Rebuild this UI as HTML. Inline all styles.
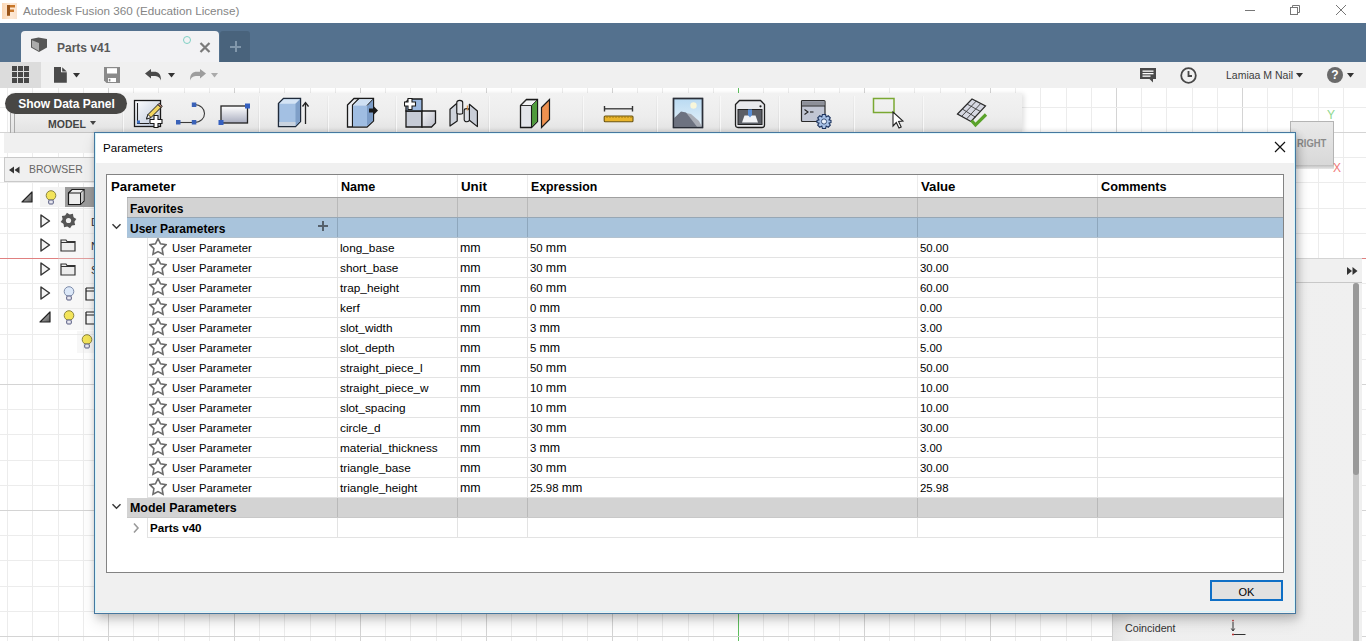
<!DOCTYPE html>
<html><head><meta charset="utf-8"><style>
*{box-sizing:border-box;margin:0;padding:0}
html,body{width:1366px;height:641px;overflow:hidden;background:#fff;font-family:"Liberation Sans",sans-serif;position:relative}
.a{position:absolute;white-space:nowrap}
.th{font-size:12.6px;font-weight:bold;color:#000;line-height:16px}
.tb{font-size:12px;font-weight:bold;color:#000;line-height:16px}
.td{font-size:11.4px;color:#000;line-height:16px}
.up{font-size:11.3px}
.mm{font-size:12.4px}
#dlgshadow{display:none}
#dlg{left:94px;top:132px;width:1202px;height:482px;background:#f0f0f0;border:1px solid #46789f;box-shadow:0 -1px 4px rgba(0,0,0,.10),3px 4px 8px rgba(0,0,0,.16),1px 8px 14px rgba(0,0,0,.12)}
</style></head><body>
<div class="a" style="left:0;top:88px;width:1366px;height:553px;background:#fff"></div>
<div class="a" style="left:7px;top:88px;width:1px;height:553px;background:#ececec"></div>
<div class="a" style="left:32px;top:88px;width:1px;height:553px;background:#ececec"></div>
<div class="a" style="left:58px;top:88px;width:1px;height:553px;background:#ececec"></div>
<div class="a" style="left:83px;top:88px;width:1px;height:553px;background:#ececec"></div>
<div class="a" style="left:108px;top:88px;width:1px;height:553px;background:#d4d4d4"></div>
<div class="a" style="left:133px;top:88px;width:1px;height:553px;background:#ececec"></div>
<div class="a" style="left:158px;top:88px;width:1px;height:553px;background:#ececec"></div>
<div class="a" style="left:184px;top:88px;width:1px;height:553px;background:#ececec"></div>
<div class="a" style="left:209px;top:88px;width:1px;height:553px;background:#ececec"></div>
<div class="a" style="left:234px;top:88px;width:1px;height:553px;background:#d4d4d4"></div>
<div class="a" style="left:259px;top:88px;width:1px;height:553px;background:#ececec"></div>
<div class="a" style="left:284px;top:88px;width:1px;height:553px;background:#ececec"></div>
<div class="a" style="left:310px;top:88px;width:1px;height:553px;background:#ececec"></div>
<div class="a" style="left:335px;top:88px;width:1px;height:553px;background:#ececec"></div>
<div class="a" style="left:360px;top:88px;width:1px;height:553px;background:#d4d4d4"></div>
<div class="a" style="left:385px;top:88px;width:1px;height:553px;background:#ececec"></div>
<div class="a" style="left:410px;top:88px;width:1px;height:553px;background:#ececec"></div>
<div class="a" style="left:436px;top:88px;width:1px;height:553px;background:#ececec"></div>
<div class="a" style="left:461px;top:88px;width:1px;height:553px;background:#ececec"></div>
<div class="a" style="left:486px;top:88px;width:1px;height:553px;background:#d4d4d4"></div>
<div class="a" style="left:511px;top:88px;width:1px;height:553px;background:#ececec"></div>
<div class="a" style="left:536px;top:88px;width:1px;height:553px;background:#ececec"></div>
<div class="a" style="left:562px;top:88px;width:1px;height:553px;background:#ececec"></div>
<div class="a" style="left:587px;top:88px;width:1px;height:553px;background:#ececec"></div>
<div class="a" style="left:612px;top:88px;width:1px;height:553px;background:#d4d4d4"></div>
<div class="a" style="left:637px;top:88px;width:1px;height:553px;background:#ececec"></div>
<div class="a" style="left:662px;top:88px;width:1px;height:553px;background:#ececec"></div>
<div class="a" style="left:688px;top:88px;width:1px;height:553px;background:#ececec"></div>
<div class="a" style="left:713px;top:88px;width:1px;height:553px;background:#ececec"></div>
<div class="a" style="left:738px;top:88px;width:1px;height:553px;background:#5fbf5f"></div>
<div class="a" style="left:763px;top:88px;width:1px;height:553px;background:#ececec"></div>
<div class="a" style="left:788px;top:88px;width:1px;height:553px;background:#ececec"></div>
<div class="a" style="left:814px;top:88px;width:1px;height:553px;background:#ececec"></div>
<div class="a" style="left:839px;top:88px;width:1px;height:553px;background:#ececec"></div>
<div class="a" style="left:864px;top:88px;width:1px;height:553px;background:#d4d4d4"></div>
<div class="a" style="left:889px;top:88px;width:1px;height:553px;background:#ececec"></div>
<div class="a" style="left:914px;top:88px;width:1px;height:553px;background:#ececec"></div>
<div class="a" style="left:940px;top:88px;width:1px;height:553px;background:#ececec"></div>
<div class="a" style="left:965px;top:88px;width:1px;height:553px;background:#ececec"></div>
<div class="a" style="left:990px;top:88px;width:1px;height:553px;background:#d4d4d4"></div>
<div class="a" style="left:1015px;top:88px;width:1px;height:553px;background:#ececec"></div>
<div class="a" style="left:1040px;top:88px;width:1px;height:553px;background:#ececec"></div>
<div class="a" style="left:1066px;top:88px;width:1px;height:553px;background:#ececec"></div>
<div class="a" style="left:1091px;top:88px;width:1px;height:553px;background:#ececec"></div>
<div class="a" style="left:1116px;top:88px;width:1px;height:553px;background:#d4d4d4"></div>
<div class="a" style="left:1141px;top:88px;width:1px;height:553px;background:#ececec"></div>
<div class="a" style="left:1166px;top:88px;width:1px;height:553px;background:#ececec"></div>
<div class="a" style="left:1192px;top:88px;width:1px;height:553px;background:#ececec"></div>
<div class="a" style="left:1217px;top:88px;width:1px;height:553px;background:#ececec"></div>
<div class="a" style="left:1242px;top:88px;width:1px;height:553px;background:#d4d4d4"></div>
<div class="a" style="left:1267px;top:88px;width:1px;height:553px;background:#ececec"></div>
<div class="a" style="left:1292px;top:88px;width:1px;height:553px;background:#ececec"></div>
<div class="a" style="left:1318px;top:88px;width:1px;height:553px;background:#ececec"></div>
<div class="a" style="left:1343px;top:88px;width:1px;height:553px;background:#ececec"></div>
<div class="a" style="left:0;top:107px;width:1366px;height:1px;background:#ececec"></div>
<div class="a" style="left:0;top:132px;width:1366px;height:1px;background:#d4d4d4"></div>
<div class="a" style="left:0;top:157px;width:1366px;height:1px;background:#ececec"></div>
<div class="a" style="left:0;top:182px;width:1366px;height:1px;background:#ececec"></div>
<div class="a" style="left:0;top:208px;width:1366px;height:1px;background:#ececec"></div>
<div class="a" style="left:0;top:233px;width:1366px;height:1px;background:#ececec"></div>
<div class="a" style="left:0;top:258px;width:1366px;height:1px;background:#e08080"></div>
<div class="a" style="left:0;top:283px;width:1366px;height:1px;background:#ececec"></div>
<div class="a" style="left:0;top:308px;width:1366px;height:1px;background:#ececec"></div>
<div class="a" style="left:0;top:334px;width:1366px;height:1px;background:#ececec"></div>
<div class="a" style="left:0;top:359px;width:1366px;height:1px;background:#ececec"></div>
<div class="a" style="left:0;top:384px;width:1366px;height:1px;background:#d4d4d4"></div>
<div class="a" style="left:0;top:409px;width:1366px;height:1px;background:#ececec"></div>
<div class="a" style="left:0;top:434px;width:1366px;height:1px;background:#ececec"></div>
<div class="a" style="left:0;top:460px;width:1366px;height:1px;background:#ececec"></div>
<div class="a" style="left:0;top:485px;width:1366px;height:1px;background:#ececec"></div>
<div class="a" style="left:0;top:510px;width:1366px;height:1px;background:#d4d4d4"></div>
<div class="a" style="left:0;top:535px;width:1366px;height:1px;background:#ececec"></div>
<div class="a" style="left:0;top:560px;width:1366px;height:1px;background:#ececec"></div>
<div class="a" style="left:0;top:586px;width:1366px;height:1px;background:#ececec"></div>
<div class="a" style="left:0;top:611px;width:1366px;height:1px;background:#ececec"></div>
<div class="a" style="left:0;top:636px;width:1366px;height:1px;background:#d4d4d4"></div>
<div class="a" style="left:0;top:0;width:1366px;height:23px;background:#fff"></div>
<div class="a" style="left:2px;top:3px;width:15px;height:16px;background:linear-gradient(90deg,#fbd7b4,#fde9d6 60%,#fbe2cc)"></div>
<svg class="a" style="left:6px;top:4px" width="10" height="13" viewBox="0 0 10 13"><path d="M1 1 H9 V3.6 H4 V5.6 H8 V8 H4 V11.6 H1 Z" fill="#c8772a"/><path d="M1 1 H4 V11.6 H1 Z" fill="#9a5418"/></svg>
<div class="a" style="left:23px;top:3px;font-size:11.7px;color:#858585;line-height:15px">Autodesk Fusion 360 (Education License)</div>
<div class="a" style="left:1245px;top:10px;width:10px;height:1px;background:#777"></div>
<svg class="a" style="left:1289px;top:4px" width="12" height="12" viewBox="0 0 12 12"><path d="M3.5 3.5 V1.5 H10.5 V8.5 H8.5" fill="none" stroke="#777" stroke-width="1"/><rect x="1.5" y="3.5" width="7" height="7" fill="none" stroke="#777" stroke-width="1"/></svg>
<svg class="a" style="left:1335px;top:4px" width="12" height="12" viewBox="0 0 12 12"><path d="M1 1 L11 11 M11 1 L1 11" stroke="#777" stroke-width="1"/></svg>
<div class="a" style="left:0;top:23px;width:1366px;height:39px;background:#54718e"></div>
<div class="a" style="left:21px;top:31px;width:198px;height:31px;background:#f2f2f4;border-radius:4px 4px 0 0"></div>
<div class="a" style="left:220px;top:31px;width:30px;height:31px;background:#49637c;border-radius:3px 3px 0 0"></div>
<div class="a" style="left:230px;top:46px;width:11px;height:1.5px;background:#8197ab"></div>
<div class="a" style="left:235px;top:41px;width:1.5px;height:11px;background:#8197ab"></div>
<svg class="a" style="left:30px;top:36px" width="18" height="17" viewBox="0 0 18 17"><path d="M1 3 L8.5 1.5 L17 3 L17 11.5 L9 16 L1 11.5 Z" fill="#565656"/><path d="M2 4.2 L9 7 L9 15 L2 11 Z" fill="#ababab"/></svg>
<div class="a" style="left:57px;top:41px;font-size:12px;font-weight:bold;color:#595959;line-height:15px">Parts v41</div>
<div class="a" style="left:183px;top:36px;width:8px;height:8px;border:1.3px solid #7fd0c4;border-radius:50%"></div>
<svg class="a" style="left:199px;top:42px" width="12" height="11" viewBox="0 0 12 11"><path d="M1.5 1 L10.5 10 M10.5 1 L1.5 10" stroke="#7a7a7a" stroke-width="2.2"/></svg>
<div class="a" style="left:0;top:62px;width:1366px;height:26px;background:#f0f0f0"></div>
<div class="a" style="left:0;top:62px;width:41px;height:26px;background:#dcdcdc"></div>
<svg class="a" style="left:12px;top:66px" width="17" height="17" viewBox="0 0 17 17"><rect x="0" y="0" width="5" height="5" fill="#474747"/><rect x="6" y="0" width="5" height="5" fill="#474747"/><rect x="12" y="0" width="5" height="5" fill="#474747"/><rect x="0" y="6" width="5" height="5" fill="#474747"/><rect x="6" y="6" width="5" height="5" fill="#474747"/><rect x="12" y="6" width="5" height="5" fill="#474747"/><rect x="0" y="12" width="5" height="5" fill="#474747"/><rect x="6" y="12" width="5" height="5" fill="#474747"/><rect x="12" y="12" width="5" height="5" fill="#474747"/></svg>
<svg class="a" style="left:54px;top:67px" width="13" height="16" viewBox="0 0 13 16"><path d="M0 0 H7 V5.2 H12.8 V15.8 H0 Z" fill="#4a4a4a"/><path d="M8.2 0.2 L12.8 4.4 H8.2 Z" fill="#4a4a4a"/></svg>
<svg class="a" style="left:73px;top:73px" width="7" height="5" viewBox="0 0 7 5"><path d="M0 0 H7 L3.5 4.5 Z" fill="#333"/></svg>
<svg class="a" style="left:104px;top:67px" width="16" height="16" viewBox="0 0 16 16"><path d="M0 0 H16 V16 H2.5 L0 13.5 Z" fill="#8a8a8a"/><rect x="3" y="1.2" width="10" height="5.3" fill="#fff"/><rect x="4" y="11" width="8" height="4" fill="#fff"/><rect x="4.8" y="11.8" width="1.6" height="2.6" fill="#8a8a8a"/></svg>
<svg class="a" style="left:145px;top:69px" width="17" height="12" viewBox="0 0 17 12"><path d="M0 4.5 L6 0 V2.8 H9 C13.5 2.8 16 5 16 11.5 C14.5 8 12.5 7 9 7 H6 V9.5 Z" fill="#4a4a4a"/></svg>
<svg class="a" style="left:168px;top:73px" width="7" height="5" viewBox="0 0 7 5"><path d="M0 0 H7 L3.5 4.5 Z" fill="#333"/></svg>
<svg class="a" style="left:189px;top:69px" width="17" height="12" viewBox="0 0 17 12"><path d="M17 4.5 L11 0 V2.8 H8 C3.5 2.8 1 5 1 11.5 C2.5 8 4.5 7 8 7 H11 V9.5 Z" fill="#9d9d9d"/></svg>
<svg class="a" style="left:211px;top:73px" width="7" height="5" viewBox="0 0 7 5"><path d="M0 0 H7 L3.5 4.5 Z" fill="#aaa"/></svg>
<svg class="a" style="left:1140px;top:68px" width="17" height="15" viewBox="0 0 17 15"><path d="M0 0 H16 V11 H13 L13 14.5 L9.5 11 H0 Z" fill="#4a4a4a"/><rect x="2.5" y="2.5" width="11" height="1.3" fill="#fff"/><rect x="2.5" y="5" width="11" height="1.3" fill="#fff"/><rect x="2.5" y="7.5" width="8" height="1.3" fill="#fff"/></svg>
<svg class="a" style="left:1180px;top:67px" width="17" height="17" viewBox="0 0 17 17"><circle cx="8.5" cy="8.5" r="7.3" fill="none" stroke="#474747" stroke-width="1.8"/><path d="M8.5 4 V9 H12" fill="none" stroke="#474747" stroke-width="1.8"/></svg>
<div class="a" style="left:1226px;top:68px;font-size:10.5px;letter-spacing:0;color:#3c3c3c;line-height:14px">Lamiaa M Nail</div>
<svg class="a" style="left:1296px;top:73px" width="7" height="5" viewBox="0 0 7 5"><path d="M0 0 H7 L3.5 4.5 Z" fill="#333"/></svg>
<div class="a" style="left:1327px;top:67px;width:16px;height:16px;border-radius:50%;background:#6a6a6a;color:#fff;font-weight:bold;font-size:12px;text-align:center;line-height:16px">?</div>
<svg class="a" style="left:1347px;top:73px" width="7" height="5" viewBox="0 0 7 5"><path d="M0 0 H7 L3.5 4.5 Z" fill="#333"/></svg>
<div class="a" style="left:10px;top:93px;width:1012px;height:39px;background:linear-gradient(#f2f2f2,#ededed 60%,#e3e3e3);box-shadow:2px 1px 5px rgba(0,0,0,.13)"></div>
<div class="a" style="left:122px;top:96px;width:1px;height:36px;background:linear-gradient(#ededed,#dadada)"></div><div class="a" style="left:123px;top:96px;width:1px;height:36px;background:#f8f8f8"></div>
<div class="a" style="left:258px;top:96px;width:1px;height:36px;background:linear-gradient(#ededed,#dadada)"></div><div class="a" style="left:259px;top:96px;width:1px;height:36px;background:#f8f8f8"></div>
<div class="a" style="left:327px;top:96px;width:1px;height:36px;background:linear-gradient(#ededed,#dadada)"></div><div class="a" style="left:328px;top:96px;width:1px;height:36px;background:#f8f8f8"></div>
<div class="a" style="left:395px;top:96px;width:1px;height:36px;background:linear-gradient(#ededed,#dadada)"></div><div class="a" style="left:396px;top:96px;width:1px;height:36px;background:#f8f8f8"></div>
<div class="a" style="left:488px;top:96px;width:1px;height:36px;background:linear-gradient(#ededed,#dadada)"></div><div class="a" style="left:489px;top:96px;width:1px;height:36px;background:#f8f8f8"></div>
<div class="a" style="left:582px;top:96px;width:1px;height:36px;background:linear-gradient(#ededed,#dadada)"></div><div class="a" style="left:583px;top:96px;width:1px;height:36px;background:#f8f8f8"></div>
<div class="a" style="left:656px;top:96px;width:1px;height:36px;background:linear-gradient(#ededed,#dadada)"></div><div class="a" style="left:657px;top:96px;width:1px;height:36px;background:#f8f8f8"></div>
<div class="a" style="left:719px;top:96px;width:1px;height:36px;background:linear-gradient(#ededed,#dadada)"></div><div class="a" style="left:720px;top:96px;width:1px;height:36px;background:#f8f8f8"></div>
<div class="a" style="left:778px;top:96px;width:1px;height:36px;background:linear-gradient(#ededed,#dadada)"></div><div class="a" style="left:779px;top:96px;width:1px;height:36px;background:#f8f8f8"></div>
<div class="a" style="left:853px;top:96px;width:1px;height:36px;background:linear-gradient(#ededed,#dadada)"></div><div class="a" style="left:854px;top:96px;width:1px;height:36px;background:#f8f8f8"></div>
<div class="a" style="left:922px;top:96px;width:1px;height:36px;background:linear-gradient(#ededed,#dadada)"></div><div class="a" style="left:923px;top:96px;width:1px;height:36px;background:#f8f8f8"></div>
<svg class="a" style="left:0;top:0" width="0" height="0"><defs><linearGradient id="gsk" x1="0" y1="0" x2="1" y2="1"><stop offset="0" stop-color="#ffffff"/><stop offset="1" stop-color="#b8c4d8"/></linearGradient><linearGradient id="grc" x1="0" y1="0" x2="0" y2="1"><stop offset="0" stop-color="#ffffff"/><stop offset="1" stop-color="#a9adbf"/></linearGradient><linearGradient id="gsky" x1="0" y1="0" x2="0" y2="1"><stop offset="0" stop-color="#b9daf2"/><stop offset="1" stop-color="#e6f2fa"/></linearGradient><linearGradient id="ggr" x1="0" y1="0" x2="1" y2="1"><stop offset="0" stop-color="#f4f4f6"/><stop offset="1" stop-color="#b9bcc8"/></linearGradient></defs></svg>
<svg class="a" style="left:133px;top:99px" width="30" height="31" viewBox="0 0 30 31"><rect x="1.5" y="1.5" width="26" height="26" fill="url(#gsk)" stroke="#1a1a1a" stroke-width="1.3"/><path d="M4.5 4 V24.5 H16" fill="none" stroke="#222" stroke-width="1.1"/><rect x="4" y="21.5" width="3" height="3" fill="#3d6fc4"/><path d="M13.5 20 L15 15.5 L25 5.5 L28 8.5 L18 18.5 Z" fill="#f2d660" stroke="#1a1a1a" stroke-width="1"/><path d="M25 5.5 L26.3 4.2 L29.3 7.2 L28 8.5 Z" fill="#c08a7a" stroke="#1a1a1a" stroke-width="0.9"/><path d="M13.5 20 L15 15.5 L18 18.5 Z" fill="#fff" stroke="#1a1a1a" stroke-width="0.9"/><path d="M21 16.5 H25 V20.5 H29 V24.5 H25 V28.5 H21 V24.5 H17 V20.5 H21 Z" fill="#fff" stroke="#1a1a1a" stroke-width="1.1"/></svg>
<svg class="a" style="left:175px;top:102px" width="34" height="24" viewBox="0 0 34 24"><path d="M3 20.5 H19" stroke="#3a3a3a" stroke-width="1.1"/><path d="M19 2.5 C33 2.5 33 20.5 19 20.5" fill="none" stroke="#3a3a3a" stroke-width="1.1"/><rect x="1" y="18" width="4.5" height="4.5" fill="#3a62b8"/><rect x="16.8" y="18" width="4.5" height="4.5" fill="#3a62b8"/><rect x="16.8" y="0.5" width="4.5" height="4.5" fill="#3a62b8"/></svg>
<svg class="a" style="left:218px;top:103px" width="33" height="23" viewBox="0 0 33 23"><rect x="3" y="3" width="26.5" height="17" fill="url(#grc)" stroke="#222" stroke-width="1.3"/><rect x="0.5" y="17" width="5" height="5" fill="#3560c0"/><rect x="27" y="0.5" width="5" height="5" fill="#3560c0"/></svg>
<svg class="a" style="left:277px;top:97px" width="32" height="32" viewBox="0 0 32 32"><path d="M1.5 6.5 L6.5 1.5 H23.5 V24.5 L18.5 29.5 H1.5 Z" fill="#a3c0e3" stroke="#1f2a3a" stroke-width="1.4"/><path d="M2.2 6.8 L6.8 2.2 H23 L18.5 6.8 Z" fill="#d5e4f5"/><path d="M18.5 6.8 L23 2.2 V24.3 L18.5 29 Z" fill="#7f9fc8"/><path d="M2.2 25 H18.5 V29 H2.2 Z" fill="#c9d3e0"/><path d="M28.5 27 V6" stroke="#222" stroke-width="1.3"/><path d="M25.5 9.5 L28.5 5.5 L31.5 9.5" fill="none" stroke="#222" stroke-width="1.3"/></svg>
<svg class="a" style="left:346px;top:97px" width="33" height="32" viewBox="0 0 33 32"><path d="M1.5 8 L8 1.5 H27.5 V24 L21 30 H1.5 Z" fill="#eef0f4" stroke="#1a1a1a" stroke-width="1.3"/><path d="M6.5 30 V8 L13 1.5" fill="none" stroke="#1a1a1a" stroke-width="1.2"/><path d="M7 8.5 L13.3 2.2 H27 L21 8.5 Z" fill="#cfe0f3"/><path d="M7 8.5 H21 V29.3 H7 Z" fill="#9fbde2"/><path d="M21 8.5 L27 2.2 V23.8 L21 29.3 Z" fill="#7b9cc7"/><path d="M21 8.5 L27 2.2" stroke="#1a1a1a" stroke-width="1"/><path d="M23 11.5 H27.5 V9 L32 13.5 L27.5 18 V15.5 H23 Z" fill="#1a1a1a"/></svg>
<svg class="a" style="left:404px;top:97px" width="33" height="32" viewBox="0 0 33 32"><path d="M2 14 H18 V30 H2 Z" fill="#c6cbd6" stroke="#1a1a1a" stroke-width="1.3"/><path d="M18 14 H31.5 L31.5 26 L27.5 30 H18 Z" fill="url(#ggr)" stroke="#1a1a1a" stroke-width="1.3"/><path d="M2 14 V5 L5 2 H18 V14 Z" fill="#9bb8df" stroke="#1a1a1a" stroke-width="1.3"/><path d="M4 1.5 H8 V5 H11.5 V9 H8 V12.5 H4 V9 H0.5 V5 H4 Z" fill="#fff" stroke="#1a1a1a" stroke-width="1.1"/></svg>
<svg class="a" style="left:449px;top:99px" width="30" height="30" viewBox="0 0 30 30"><path d="M1 10.3 L8.2 4 V22 L1 27 Z" fill="#cfd4dc" stroke="#1a1a1a" stroke-width="1.2" stroke-linejoin="round"/><path d="M7.8 3.5 C7.8 0.6 13.7 0.6 13.7 3.5 V14 C13.7 15.5 7.8 15.5 7.8 14 Z" fill="#e4e6ea" stroke="#1a1a1a" stroke-width="1.1"/><path d="M20.4 5.3 L28.4 12 V27.6 L20.4 21.3 Z" fill="#c9ced8" stroke="#1a1a1a" stroke-width="1.2" stroke-linejoin="round"/><path d="M15.2 11.5 C15.2 9 20.4 9 20.4 11.5 V20.8 C20.4 23.3 15.2 23.3 15.2 20.8 Z" fill="#dcdfe5" stroke="#1a1a1a" stroke-width="1.1"/><path d="M18.3 6.5 V11.5" stroke="#e08a30" stroke-width="1"/></svg>
<svg class="a" style="left:519px;top:98px" width="34" height="31" viewBox="0 0 34 31"><path d="M1.5 7.5 L7.5 1.5 H18.5 V23.5 L12.5 29.5 H1.5 Z" fill="#e3e5ea" stroke="#1a1a1a" stroke-width="1.3"/><path d="M12.5 7.5 L18 2 V23.3 L12.5 29 Z" fill="#4f9a3c"/><path d="M2 7.5 H12.5 M12.5 7.5 V29" stroke="#1a1a1a" stroke-width="1.1"/><path d="M2 7.5 L7.5 2 H18 L12.5 7.5 Z" fill="#f2f3f5" stroke="#1a1a1a" stroke-width="0.8"/><path d="M22.5 9.5 L30.5 1.5 V21.5 L22.5 29.5 Z" fill="#ee9150" stroke="#1a1a1a" stroke-width="1.2"/></svg>
<svg class="a" style="left:603px;top:105px" width="32" height="18" viewBox="0 0 32 18"><path d="M1.5 1 V6.5 M29.5 1 V6.5" stroke="#333" stroke-width="1.4"/><path d="M1.5 3.8 H29.5" stroke="#333" stroke-width="1.3"/><rect x="1.2" y="11" width="28.8" height="5.8" rx="1" fill="#e9b52c" stroke="#6b5412" stroke-width="1.1"/><path d="M4 11.5 V13 M7 11.5 V13 M10 11.5 V13 M13 11.5 V13 M16 11.5 V13 M19 11.5 V13 M22 11.5 V13 M25 11.5 V13 M28 11.5 V13" stroke="#8a6a10" stroke-width="0.8"/></svg>
<svg class="a" style="left:672px;top:97px" width="32" height="32" viewBox="0 0 32 32"><rect x="1.5" y="1.5" width="29" height="29" fill="url(#gsky)" stroke="#2a2e38" stroke-width="1.4"/><circle cx="21.5" cy="8.5" r="3.2" fill="#fbf7d8" opacity=".95"/><path d="M2.2 22 L9 15 L19 17 L27 24 L30 29.8 H2.2 Z" fill="#a9adb6"/><path d="M2.2 21 L9 14.5 L14 15.5 L25 29.8 H2.2 Z" fill="#6d7280"/><rect x="1.5" y="1.5" width="29" height="29" fill="none" stroke="#2a2e38" stroke-width="1.4"/></svg>
<svg class="a" style="left:734px;top:99px" width="32" height="30" viewBox="0 0 32 30"><path d="M1.5 5.5 L5.5 1.5 H26.5 L30.5 5.5 V26 Q30.5 28.5 28 28.5 H4 Q1.5 28.5 1.5 26 Z" fill="#e8e9ec" stroke="#1f1f1f" stroke-width="1.3"/><rect x="4" y="10.5" width="24" height="15" fill="#5b5e66" stroke="#222" stroke-width="1"/><path d="M8 23.5 L10.5 16.5 H21.5 L24 23.5 Z" fill="#f2f3f6"/><path d="M14 10.5 H18 V16 L16 18.5 L14 16 Z" fill="#5a8fd6"/><circle cx="26.5" cy="7.3" r="1.1" fill="#1e1e1e"/></svg>
<svg class="a" style="left:800px;top:99px" width="34" height="31" viewBox="0 0 34 31"><rect x="1.5" y="1.5" width="23.5" height="21" rx="1" fill="#c1c6d4" stroke="#2a2a2a" stroke-width="1.2"/><rect x="2.2" y="2.2" width="22.2" height="4.5" fill="#8d9099"/><path d="M2 7 H25" stroke="#2a2a2a" stroke-width="1"/><path d="M4.5 10.5 L8 13 L4.5 15.5" fill="none" stroke="#222" stroke-width="1.1"/><path d="M10 13 H13.5" stroke="#222" stroke-width="1.1"/><g transform="translate(24,22.5)"><path d="M-1.6 -7 H1.6 L2.2 -4.6 L4.2 -5.7 L6.3 -3.6 L5 -1.6 L7 -1 V1 L5 1.6 L6.3 3.6 L4.2 5.7 L2.2 4.6 L1.6 7 H-1.6 L-2.2 4.6 L-4.2 5.7 L-6.3 3.6 L-5 1.6 L-7 1 V-1 L-5 -1.6 L-6.3 -3.6 L-4.2 -5.7 L-2.2 -4.6 Z" fill="#a9c3e8" stroke="#1e3560" stroke-width="1.1"/><circle r="2.6" fill="#eaf2fc" stroke="#1e3560" stroke-width="0.8"/></g></svg>
<svg class="a" style="left:872px;top:97px" width="32" height="32" viewBox="0 0 32 32"><rect x="1.5" y="1.5" width="20.5" height="14" fill="none" stroke="#7aa832" stroke-width="1.5"/><path d="M21 15 V29 L24.3 25.5 L27 31 L29.2 30 L26.6 24.5 L31 24 Z" fill="#fff" stroke="#222" stroke-width="1.1"/></svg>
<svg class="a" style="left:956px;top:98px" width="33" height="30" viewBox="0 0 33 30"><path d="M1.5 16 L16 1 L29.5 8 L15 23.5 Z" fill="#d6d8e2" stroke="#2a2a2a" stroke-width="1.2"/><path d="M6.3 11 L19.5 19.2 M11 6 L24.5 13.5 M5.5 18.5 L20.5 2.8 M10.5 21 L25 5.2" stroke="#3a3a3a" stroke-width="0.9"/><path d="M15.5 22.5 L19.5 27 L30 16.5" fill="none" stroke="#5aa22a" stroke-width="3.2"/></svg>
<div class="a" style="left:10px;top:113px;width:1px;height:21px;background:#a8a8a8"></div><div class="a" style="left:14px;top:113px;width:1px;height:21px;background:#a8a8a8"></div>
<div class="a" style="left:48px;top:118px;font-size:10.5px;font-weight:bold;color:#444;line-height:12px">MODEL</div>
<svg class="a" style="left:90px;top:121px" width="6" height="4" viewBox="0 0 6 4"><path d="M0 0 H6 L3 4 Z" fill="#444"/></svg>
<div class="a" style="left:5px;top:93px;width:122px;height:21px;border-radius:11px;background:#484745;color:#fff;font-size:12px;font-weight:bold;text-align:center;line-height:23px;text-indent:1px">Show Data Panel</div>
<div class="a" style="left:4px;top:133px;width:100px;height:20px;background:#f0f0f0"></div>
<div class="a" style="left:4px;top:157px;width:100px;height:25px;background:#f0f0f0;border:1px solid #c9c9c9"></div>
<svg class="a" style="left:9px;top:166px" width="11" height="8" viewBox="0 0 11 8"><path d="M5 0.5 V7.5 L0 4 Z M10.5 0.5 V7.5 L5.5 4 Z" fill="#333"/></svg>
<div class="a" style="left:29px;top:163px;font-size:10.4px;color:#666;line-height:14px">BROWSER</div>
<div class="a" style="left:40px;top:187px;width:25px;height:20px;background:#f3f3f3"></div>
<div class="a" style="left:65px;top:187px;width:29px;height:20px;background:#9c9c9c"></div>
<div class="a" style="left:58px;top:210px;width:36px;height:120px;background:rgba(230,230,230,.3)"></div>
<div class="a" style="left:77px;top:331px;width:17px;height:22px;background:rgba(230,230,230,.3)"></div>
<svg class="a" style="left:21px;top:191px" width="12" height="12" viewBox="0 0 12 12"><defs><linearGradient id="gt" x1="0" y1="0" x2="1" y2="1"><stop offset="0" stop-color="#d8d8d8"/><stop offset="1" stop-color="#555"/></linearGradient></defs><path d="M1 11 L11 1 V11 Z" fill="url(#gt)" stroke="#222" stroke-width="1.2" stroke-linejoin="round"/></svg>
<svg class="a" style="left:45px;top:190px" width="12" height="15" viewBox="0 0 12 15"><circle cx="6" cy="5.5" r="4.8" fill="#f3e45a" stroke="#8a8440" stroke-width="1"/><rect x="3.7" y="10" width="4.6" height="4" rx="1" fill="#e8e8f0" stroke="#555a80" stroke-width="1"/></svg>
<svg class="a" style="left:67px;top:188px" width="20" height="18" viewBox="0 0 20 18"><path d="M1.5 5 L5 1.5 H17 V13 L13.5 16.5 H1.5 Z" fill="#eeeeee" stroke="#1a1a1a" stroke-width="1.2"/><path d="M1.5 5 H13.5 V16.5 M13.5 5 L17 1.5" fill="none" stroke="#1a1a1a" stroke-width="1"/><path d="M14 5.5 L16.5 3 V12.8 L14 15.5 Z" fill="#c8c8c8"/></svg>
<svg class="a" style="left:40px;top:214px" width="11" height="14" viewBox="0 0 11 14"><path d="M1 1 L9.5 7 L1 13 Z" fill="#f4f4f4" stroke="#333" stroke-width="1.4" stroke-linejoin="round"/></svg>
<svg class="a" style="left:60px;top:212px" width="17" height="17" viewBox="0 0 17 17"><g transform="translate(8.5,8.5)"><polygon points="7.85,-1.56 5.88,1.17 6.65,4.44 3.33,4.99 1.56,7.85 -1.17,5.88 -4.44,6.65 -4.99,3.33 -7.85,1.56 -5.88,-1.17 -6.65,-4.44 -3.33,-4.99 -1.56,-7.85 1.17,-5.88 4.44,-6.65 4.99,-3.33" fill="#555"/><circle r="5.8" fill="#555"/><circle r="2.6" fill="#f0f0f0"/></g></svg>
<svg class="a" style="left:40px;top:238px" width="11" height="14" viewBox="0 0 11 14"><path d="M1 1 L9.5 7 L1 13 Z" fill="#f4f4f4" stroke="#333" stroke-width="1.4" stroke-linejoin="round"/></svg>
<svg class="a" style="left:60px;top:239px" width="16" height="13" viewBox="0 0 16 13"><path d="M1 1 H6 L7 2.5 H15 V12 H1 Z" fill="#ececec" stroke="#333" stroke-width="1.2"/><path d="M1 3.5 H15" stroke="#333" stroke-width="1"/></svg>
<svg class="a" style="left:40px;top:262px" width="11" height="14" viewBox="0 0 11 14"><path d="M1 1 L9.5 7 L1 13 Z" fill="#f4f4f4" stroke="#333" stroke-width="1.4" stroke-linejoin="round"/></svg>
<svg class="a" style="left:60px;top:263px" width="16" height="13" viewBox="0 0 16 13"><path d="M1 1 H6 L7 2.5 H15 V12 H1 Z" fill="#ececec" stroke="#333" stroke-width="1.2"/><path d="M1 3.5 H15" stroke="#333" stroke-width="1"/></svg>
<svg class="a" style="left:40px;top:286px" width="11" height="14" viewBox="0 0 11 14"><path d="M1 1 L9.5 7 L1 13 Z" fill="#f4f4f4" stroke="#333" stroke-width="1.4" stroke-linejoin="round"/></svg>
<svg class="a" style="left:63px;top:286px" width="12" height="15" viewBox="0 0 12 15"><circle cx="6" cy="5.5" r="4.8" fill="#dce8f8" stroke="#7b8aa8" stroke-width="1"/><rect x="3.7" y="10" width="4.6" height="4" rx="1" fill="#e8e8f0" stroke="#555a80" stroke-width="1"/></svg>
<svg class="a" style="left:85px;top:287px" width="12" height="14" viewBox="0 0 12 14"><path d="M1 1 H12 M1 1 V13 H12 M1 4 H12" fill="none" stroke="#222" stroke-width="1.2"/></svg>
<svg class="a" style="left:39px;top:311px" width="12" height="12" viewBox="0 0 12 12"><defs><linearGradient id="gt" x1="0" y1="0" x2="1" y2="1"><stop offset="0" stop-color="#d8d8d8"/><stop offset="1" stop-color="#555"/></linearGradient></defs><path d="M1 11 L11 1 V11 Z" fill="url(#gt)" stroke="#222" stroke-width="1.2" stroke-linejoin="round"/></svg>
<svg class="a" style="left:63px;top:310px" width="12" height="15" viewBox="0 0 12 15"><circle cx="6" cy="5.5" r="4.8" fill="#f3e45a" stroke="#8a8440" stroke-width="1"/><rect x="3.7" y="10" width="4.6" height="4" rx="1" fill="#e8e8f0" stroke="#555a80" stroke-width="1"/></svg>
<svg class="a" style="left:85px;top:311px" width="12" height="14" viewBox="0 0 12 14"><path d="M1 1 H12 M1 1 V13 H12 M1 4 H12" fill="none" stroke="#222" stroke-width="1.2"/></svg>
<svg class="a" style="left:81px;top:334px" width="12" height="15" viewBox="0 0 12 15"><circle cx="6" cy="5.5" r="4.8" fill="#f3e45a" stroke="#8a8440" stroke-width="1"/><rect x="3.7" y="10" width="4.6" height="4" rx="1" fill="#e8e8f0" stroke="#555a80" stroke-width="1"/></svg>
<div class="a" style="left:91px;top:215px;font-size:11px;color:#333;line-height:14px">D</div>
<div class="a" style="left:91px;top:239px;font-size:11px;color:#333;line-height:14px">N</div>
<div class="a" style="left:91px;top:263px;font-size:11px;color:#333;line-height:14px">S</div>
<div class="a" style="left:1290px;top:121px;width:44px;height:45px;background:linear-gradient(#e9e9e9,#d8d8d8);border:1px solid #b4b4b4"></div>
<div class="a" style="left:1290px;top:165px;width:44px;height:4px;background:linear-gradient(#bdbdbd,#e8e8e8)"></div>
<div class="a" style="left:1297px;top:137px;font-size:11.5px;font-weight:bold;color:#8a8a8a;line-height:13px;transform:scaleX(.82);transform-origin:0 0">RIGHT</div>
<div class="a" style="left:1327px;top:109px;font-size:12px;color:#8ed88e;line-height:12px">Y</div>
<div class="a" style="left:1333px;top:162px;font-size:12px;color:#f07a7a;line-height:12px">X</div>
<div class="a" style="left:1112px;top:258px;width:250px;height:383px;background:linear-gradient(90deg,#e4e4e4,#efefef 20px,#f0f0f0);border-left:1px solid #d0d0d0"></div>
<div class="a" style="left:1112px;top:258px;width:250px;height:25px;background:#f0f0f0;border-bottom:1px solid #c8c8c8;border-top:1px solid #d4d4d4"></div>
<svg class="a" style="left:1347px;top:267px" width="11" height="8" viewBox="0 0 11 8"><path d="M0 0 V8 L5 4 Z M5.5 0 V8 L10.5 4 Z" fill="#333"/></svg>
<div class="a" style="left:1353px;top:283px;width:6px;height:358px;background:#c6c6c6;border-radius:3px 3px 0 0"></div>
<div class="a" style="left:1353px;top:283px;width:6px;height:192px;background:#999;border-radius:3px"></div>
<div class="a" style="left:1125px;top:621px;font-size:10.7px;color:#333;line-height:14px">Coincident</div>
<svg class="a" style="left:1229px;top:618px" width="18" height="20" viewBox="0 0 18 20"><path d="M4 4 V12.5" stroke="#333" stroke-width="1"/><path d="M2.3 10.5 L4 13 L5.7 10.5" fill="none" stroke="#333" stroke-width="1"/><path d="M4 16.5 H16.5" stroke="#333" stroke-width="1"/><circle cx="4" cy="2.6" r="0.9" fill="#b33"/><path d="M3 16.5 H5" stroke="#b33" stroke-width="1.4"/></svg>
<div class="a" id="dlgshadow"></div>
<div class="a" id="dlg"></div>
<div class="a" style="left:95px;top:133px;width:1200px;height:30px;background:#fff"></div>
<div class="a" style="left:95px;top:133px;width:1200px;height:479px;border:1px solid #d6f5fb;border-top-color:#e4f8fc"></div>
<div class="a" style="left:103px;top:141px;font-size:11.6px;color:#000;line-height:14px">Parameters</div>
<svg class="a" style="left:1273px;top:140px" width="14" height="14" viewBox="0 0 14 14"><path d="M2 2 L12 12 M12 2 L2 12" stroke="#111" stroke-width="1.2"/></svg>
<div class="a" style="left:106px;top:174px;width:1178px;height:399px;background:#fff;border:1px solid #838383"></div>
<div class="a" style="left:127px;top:197px;width:1156px;height:1px;background:#a0a0a0"></div>
<div class="a" style="left:337px;top:175px;width:1px;height:22px;background:#ececec"></div>
<div class="a" style="left:457px;top:175px;width:1px;height:22px;background:#ececec"></div>
<div class="a" style="left:527px;top:175px;width:1px;height:22px;background:#ececec"></div>
<div class="a" style="left:917px;top:175px;width:1px;height:22px;background:#ececec"></div>
<div class="a" style="left:1097px;top:175px;width:1px;height:22px;background:#ececec"></div>
<div class="a th" style="left:111px;top:179px;font-size:13.2px">Parameter</div>
<div class="a th" style="left:341px;top:179px;font-size:12.6px">Name</div>
<div class="a th" style="left:461px;top:179px;font-size:13.3px">Unit</div>
<div class="a th" style="left:531px;top:179px;font-size:12.3px">Expression</div>
<div class="a th" style="left:921px;top:179px;font-size:13.2px">Value</div>
<div class="a th" style="left:1101px;top:179px;font-size:12.7px">Comments</div>
<div class="a" style="left:127px;top:198px;width:1156px;height:19px;background:#d3d3d3"></div>
<div class="a" style="left:127px;top:217px;width:1156px;height:1px;background:#97a7b5"></div>
<div class="a" style="left:127px;top:198px;width:1px;height:19px;background:#bdbdbd"></div>
<div class="a" style="left:127px;top:218px;width:1156px;height:19px;background:#a9c4dc"></div>
<div class="a" style="left:127px;top:237px;width:1156px;height:1px;background:#b3c2cf"></div>
<div class="a" style="left:337px;top:198px;width:1px;height:19px;background:#b9b9b9"></div>
<div class="a" style="left:337px;top:218px;width:1px;height:19px;background:#8ea7bd"></div>
<div class="a" style="left:457px;top:198px;width:1px;height:19px;background:#b9b9b9"></div>
<div class="a" style="left:457px;top:218px;width:1px;height:19px;background:#8ea7bd"></div>
<div class="a" style="left:527px;top:198px;width:1px;height:19px;background:#b9b9b9"></div>
<div class="a" style="left:527px;top:218px;width:1px;height:19px;background:#8ea7bd"></div>
<div class="a" style="left:917px;top:198px;width:1px;height:19px;background:#b9b9b9"></div>
<div class="a" style="left:917px;top:218px;width:1px;height:19px;background:#8ea7bd"></div>
<div class="a" style="left:1097px;top:198px;width:1px;height:19px;background:#b9b9b9"></div>
<div class="a" style="left:1097px;top:218px;width:1px;height:19px;background:#8ea7bd"></div>
<div class="a tb" style="left:130px;top:200.5px">Favorites</div>
<div class="a tb" style="left:130px;top:220.5px">User Parameters</div>
<svg class="a" style="left:111px;top:223px" width="11" height="8" viewBox="0 0 11 8"><path d="M1.5 1.3 L5.5 5.2 L9.5 1.3" fill="none" stroke="#383838" stroke-width="1.5"/></svg>
<div class="a" style="left:318px;top:225px;width:10px;height:2px;background:#56616c"></div>
<div class="a" style="left:322px;top:221px;width:2px;height:10px;background:#56616c"></div>
<div class="a" style="left:147px;top:257px;width:1136px;height:1px;background:#e3e3e3"></div>
<svg class="a" style="left:148.5px;top:237.5px" width="18" height="18" viewBox="0 0 18 18"><path d="M9.00 0.70 L11.53 5.82 L17.18 6.64 L13.09 10.63 L14.05 16.26 L9.00 13.60 L3.95 16.26 L4.91 10.63 L0.82 6.64 L6.47 5.82 Z" fill="none" stroke="#6c6c6c" stroke-width="1.6" stroke-linejoin="miter"/></svg>
<div class="a td up" style="left:172px;top:240px">User Parameter</div>
<div class="a td" style="left:340px;top:240px;font-size:11.8px">long_base</div>
<div class="a td" style="left:460px;top:240px"><span class="mm">mm</span></div>
<div class="a td" style="left:530px;top:240px">50 <span class=mm>mm</span></div>
<div class="a td" style="left:920px;top:240px">50.00</div>
<div class="a" style="left:147px;top:277px;width:1136px;height:1px;background:#e3e3e3"></div>
<svg class="a" style="left:148.5px;top:257.5px" width="18" height="18" viewBox="0 0 18 18"><path d="M9.00 0.70 L11.53 5.82 L17.18 6.64 L13.09 10.63 L14.05 16.26 L9.00 13.60 L3.95 16.26 L4.91 10.63 L0.82 6.64 L6.47 5.82 Z" fill="none" stroke="#6c6c6c" stroke-width="1.6" stroke-linejoin="miter"/></svg>
<div class="a td up" style="left:172px;top:260px">User Parameter</div>
<div class="a td" style="left:340px;top:260px;font-size:11.8px">short_base</div>
<div class="a td" style="left:460px;top:260px"><span class="mm">mm</span></div>
<div class="a td" style="left:530px;top:260px">30 <span class=mm>mm</span></div>
<div class="a td" style="left:920px;top:260px">30.00</div>
<div class="a" style="left:147px;top:297px;width:1136px;height:1px;background:#e3e3e3"></div>
<svg class="a" style="left:148.5px;top:277.5px" width="18" height="18" viewBox="0 0 18 18"><path d="M9.00 0.70 L11.53 5.82 L17.18 6.64 L13.09 10.63 L14.05 16.26 L9.00 13.60 L3.95 16.26 L4.91 10.63 L0.82 6.64 L6.47 5.82 Z" fill="none" stroke="#6c6c6c" stroke-width="1.6" stroke-linejoin="miter"/></svg>
<div class="a td up" style="left:172px;top:280px">User Parameter</div>
<div class="a td" style="left:340px;top:280px;font-size:11.8px">trap_height</div>
<div class="a td" style="left:460px;top:280px"><span class="mm">mm</span></div>
<div class="a td" style="left:530px;top:280px">60 <span class=mm>mm</span></div>
<div class="a td" style="left:920px;top:280px">60.00</div>
<div class="a" style="left:147px;top:317px;width:1136px;height:1px;background:#e3e3e3"></div>
<svg class="a" style="left:148.5px;top:297.5px" width="18" height="18" viewBox="0 0 18 18"><path d="M9.00 0.70 L11.53 5.82 L17.18 6.64 L13.09 10.63 L14.05 16.26 L9.00 13.60 L3.95 16.26 L4.91 10.63 L0.82 6.64 L6.47 5.82 Z" fill="none" stroke="#6c6c6c" stroke-width="1.6" stroke-linejoin="miter"/></svg>
<div class="a td up" style="left:172px;top:300px">User Parameter</div>
<div class="a td" style="left:340px;top:300px;font-size:11.8px">kerf</div>
<div class="a td" style="left:460px;top:300px"><span class="mm">mm</span></div>
<div class="a td" style="left:530px;top:300px">0 <span class=mm>mm</span></div>
<div class="a td" style="left:920px;top:300px">0.00</div>
<div class="a" style="left:147px;top:337px;width:1136px;height:1px;background:#e3e3e3"></div>
<svg class="a" style="left:148.5px;top:317.5px" width="18" height="18" viewBox="0 0 18 18"><path d="M9.00 0.70 L11.53 5.82 L17.18 6.64 L13.09 10.63 L14.05 16.26 L9.00 13.60 L3.95 16.26 L4.91 10.63 L0.82 6.64 L6.47 5.82 Z" fill="none" stroke="#6c6c6c" stroke-width="1.6" stroke-linejoin="miter"/></svg>
<div class="a td up" style="left:172px;top:320px">User Parameter</div>
<div class="a td" style="left:340px;top:320px;font-size:11.8px">slot_width</div>
<div class="a td" style="left:460px;top:320px"><span class="mm">mm</span></div>
<div class="a td" style="left:530px;top:320px">3 <span class=mm>mm</span></div>
<div class="a td" style="left:920px;top:320px">3.00</div>
<div class="a" style="left:147px;top:357px;width:1136px;height:1px;background:#e3e3e3"></div>
<svg class="a" style="left:148.5px;top:337.5px" width="18" height="18" viewBox="0 0 18 18"><path d="M9.00 0.70 L11.53 5.82 L17.18 6.64 L13.09 10.63 L14.05 16.26 L9.00 13.60 L3.95 16.26 L4.91 10.63 L0.82 6.64 L6.47 5.82 Z" fill="none" stroke="#6c6c6c" stroke-width="1.6" stroke-linejoin="miter"/></svg>
<div class="a td up" style="left:172px;top:340px">User Parameter</div>
<div class="a td" style="left:340px;top:340px;font-size:11.8px">slot_depth</div>
<div class="a td" style="left:460px;top:340px"><span class="mm">mm</span></div>
<div class="a td" style="left:530px;top:340px">5 <span class=mm>mm</span></div>
<div class="a td" style="left:920px;top:340px">5.00</div>
<div class="a" style="left:147px;top:377px;width:1136px;height:1px;background:#e3e3e3"></div>
<svg class="a" style="left:148.5px;top:357.5px" width="18" height="18" viewBox="0 0 18 18"><path d="M9.00 0.70 L11.53 5.82 L17.18 6.64 L13.09 10.63 L14.05 16.26 L9.00 13.60 L3.95 16.26 L4.91 10.63 L0.82 6.64 L6.47 5.82 Z" fill="none" stroke="#6c6c6c" stroke-width="1.6" stroke-linejoin="miter"/></svg>
<div class="a td up" style="left:172px;top:360px">User Parameter</div>
<div class="a td" style="left:340px;top:360px;font-size:11.8px">straight_piece_l</div>
<div class="a td" style="left:460px;top:360px"><span class="mm">mm</span></div>
<div class="a td" style="left:530px;top:360px">50 <span class=mm>mm</span></div>
<div class="a td" style="left:920px;top:360px">50.00</div>
<div class="a" style="left:147px;top:397px;width:1136px;height:1px;background:#e3e3e3"></div>
<svg class="a" style="left:148.5px;top:377.5px" width="18" height="18" viewBox="0 0 18 18"><path d="M9.00 0.70 L11.53 5.82 L17.18 6.64 L13.09 10.63 L14.05 16.26 L9.00 13.60 L3.95 16.26 L4.91 10.63 L0.82 6.64 L6.47 5.82 Z" fill="none" stroke="#6c6c6c" stroke-width="1.6" stroke-linejoin="miter"/></svg>
<div class="a td up" style="left:172px;top:380px">User Parameter</div>
<div class="a td" style="left:340px;top:380px;font-size:11.8px">straight_piece_w</div>
<div class="a td" style="left:460px;top:380px"><span class="mm">mm</span></div>
<div class="a td" style="left:530px;top:380px">10 <span class=mm>mm</span></div>
<div class="a td" style="left:920px;top:380px">10.00</div>
<div class="a" style="left:147px;top:417px;width:1136px;height:1px;background:#e3e3e3"></div>
<svg class="a" style="left:148.5px;top:397.5px" width="18" height="18" viewBox="0 0 18 18"><path d="M9.00 0.70 L11.53 5.82 L17.18 6.64 L13.09 10.63 L14.05 16.26 L9.00 13.60 L3.95 16.26 L4.91 10.63 L0.82 6.64 L6.47 5.82 Z" fill="none" stroke="#6c6c6c" stroke-width="1.6" stroke-linejoin="miter"/></svg>
<div class="a td up" style="left:172px;top:400px">User Parameter</div>
<div class="a td" style="left:340px;top:400px;font-size:11.8px">slot_spacing</div>
<div class="a td" style="left:460px;top:400px"><span class="mm">mm</span></div>
<div class="a td" style="left:530px;top:400px">10 <span class=mm>mm</span></div>
<div class="a td" style="left:920px;top:400px">10.00</div>
<div class="a" style="left:147px;top:437px;width:1136px;height:1px;background:#e3e3e3"></div>
<svg class="a" style="left:148.5px;top:417.5px" width="18" height="18" viewBox="0 0 18 18"><path d="M9.00 0.70 L11.53 5.82 L17.18 6.64 L13.09 10.63 L14.05 16.26 L9.00 13.60 L3.95 16.26 L4.91 10.63 L0.82 6.64 L6.47 5.82 Z" fill="none" stroke="#6c6c6c" stroke-width="1.6" stroke-linejoin="miter"/></svg>
<div class="a td up" style="left:172px;top:420px">User Parameter</div>
<div class="a td" style="left:340px;top:420px;font-size:11.8px">circle_d</div>
<div class="a td" style="left:460px;top:420px"><span class="mm">mm</span></div>
<div class="a td" style="left:530px;top:420px">30 <span class=mm>mm</span></div>
<div class="a td" style="left:920px;top:420px">30.00</div>
<div class="a" style="left:147px;top:457px;width:1136px;height:1px;background:#e3e3e3"></div>
<svg class="a" style="left:148.5px;top:437.5px" width="18" height="18" viewBox="0 0 18 18"><path d="M9.00 0.70 L11.53 5.82 L17.18 6.64 L13.09 10.63 L14.05 16.26 L9.00 13.60 L3.95 16.26 L4.91 10.63 L0.82 6.64 L6.47 5.82 Z" fill="none" stroke="#6c6c6c" stroke-width="1.6" stroke-linejoin="miter"/></svg>
<div class="a td up" style="left:172px;top:440px">User Parameter</div>
<div class="a td" style="left:340px;top:440px;font-size:11.8px">material_thickness</div>
<div class="a td" style="left:460px;top:440px"><span class="mm">mm</span></div>
<div class="a td" style="left:530px;top:440px">3 <span class=mm>mm</span></div>
<div class="a td" style="left:920px;top:440px">3.00</div>
<div class="a" style="left:147px;top:477px;width:1136px;height:1px;background:#e3e3e3"></div>
<svg class="a" style="left:148.5px;top:457.5px" width="18" height="18" viewBox="0 0 18 18"><path d="M9.00 0.70 L11.53 5.82 L17.18 6.64 L13.09 10.63 L14.05 16.26 L9.00 13.60 L3.95 16.26 L4.91 10.63 L0.82 6.64 L6.47 5.82 Z" fill="none" stroke="#6c6c6c" stroke-width="1.6" stroke-linejoin="miter"/></svg>
<div class="a td up" style="left:172px;top:460px">User Parameter</div>
<div class="a td" style="left:340px;top:460px;font-size:11.8px">triangle_base</div>
<div class="a td" style="left:460px;top:460px"><span class="mm">mm</span></div>
<div class="a td" style="left:530px;top:460px">30 <span class=mm>mm</span></div>
<div class="a td" style="left:920px;top:460px">30.00</div>
<div class="a" style="left:147px;top:497px;width:1136px;height:1px;background:#e3e3e3"></div>
<svg class="a" style="left:148.5px;top:477.5px" width="18" height="18" viewBox="0 0 18 18"><path d="M9.00 0.70 L11.53 5.82 L17.18 6.64 L13.09 10.63 L14.05 16.26 L9.00 13.60 L3.95 16.26 L4.91 10.63 L0.82 6.64 L6.47 5.82 Z" fill="none" stroke="#6c6c6c" stroke-width="1.6" stroke-linejoin="miter"/></svg>
<div class="a td up" style="left:172px;top:480px">User Parameter</div>
<div class="a td" style="left:340px;top:480px;font-size:11.8px">triangle_height</div>
<div class="a td" style="left:460px;top:480px"><span class="mm">mm</span></div>
<div class="a td" style="left:530px;top:480px">25.98 <span class=mm>mm</span></div>
<div class="a td" style="left:920px;top:480px">25.98</div>
<div class="a" style="left:147px;top:238px;width:1px;height:260px;background:#e3e3e3"></div>
<div class="a" style="left:337px;top:238px;width:1px;height:260px;background:#e3e3e3"></div>
<div class="a" style="left:337px;top:518px;width:1px;height:20px;background:#e3e3e3"></div>
<div class="a" style="left:457px;top:238px;width:1px;height:260px;background:#e3e3e3"></div>
<div class="a" style="left:457px;top:518px;width:1px;height:20px;background:#e3e3e3"></div>
<div class="a" style="left:527px;top:238px;width:1px;height:260px;background:#e3e3e3"></div>
<div class="a" style="left:527px;top:518px;width:1px;height:20px;background:#e3e3e3"></div>
<div class="a" style="left:917px;top:238px;width:1px;height:260px;background:#e3e3e3"></div>
<div class="a" style="left:917px;top:518px;width:1px;height:20px;background:#e3e3e3"></div>
<div class="a" style="left:1097px;top:238px;width:1px;height:260px;background:#e3e3e3"></div>
<div class="a" style="left:1097px;top:518px;width:1px;height:20px;background:#e3e3e3"></div>
<div class="a" style="left:127px;top:498px;width:1156px;height:19px;background:#d3d3d3"></div>
<div class="a" style="left:127px;top:517px;width:1156px;height:1px;background:#c8c8c8"></div>
<div class="a" style="left:337px;top:498px;width:1px;height:19px;background:#b9b9b9"></div>
<div class="a" style="left:457px;top:498px;width:1px;height:19px;background:#b9b9b9"></div>
<div class="a" style="left:527px;top:498px;width:1px;height:19px;background:#b9b9b9"></div>
<div class="a" style="left:917px;top:498px;width:1px;height:19px;background:#b9b9b9"></div>
<div class="a" style="left:1097px;top:498px;width:1px;height:19px;background:#b9b9b9"></div>
<div class="a tb" style="left:130px;top:500px;font-size:12.4px">Model Parameters</div>
<svg class="a" style="left:111px;top:503px" width="11" height="8" viewBox="0 0 11 8"><path d="M1.5 1.3 L5.5 5.2 L9.5 1.3" fill="none" stroke="#383838" stroke-width="1.5"/></svg>
<div class="a" style="left:147px;top:537px;width:1136px;height:1px;background:#e3e3e3"></div>
<div class="a" style="left:147px;top:518px;width:1px;height:20px;background:#e3e3e3"></div>
<svg class="a" style="left:132px;top:522px" width="8" height="12" viewBox="0 0 8 12"><path d="M2 1.5 L6 6 L2 10.5" fill="none" stroke="#9a9a9a" stroke-width="1.6"/></svg>
<div class="a tb" style="left:150px;top:520px;font-size:11.6px">Parts v40</div>
<div class="a" style="left:1210px;top:580px;width:73px;height:21px;border:2px solid #0f6fc6;background:#e1e1e1;font-size:11px;text-align:center;line-height:20px;color:#000">OK</div>
</body></html>
